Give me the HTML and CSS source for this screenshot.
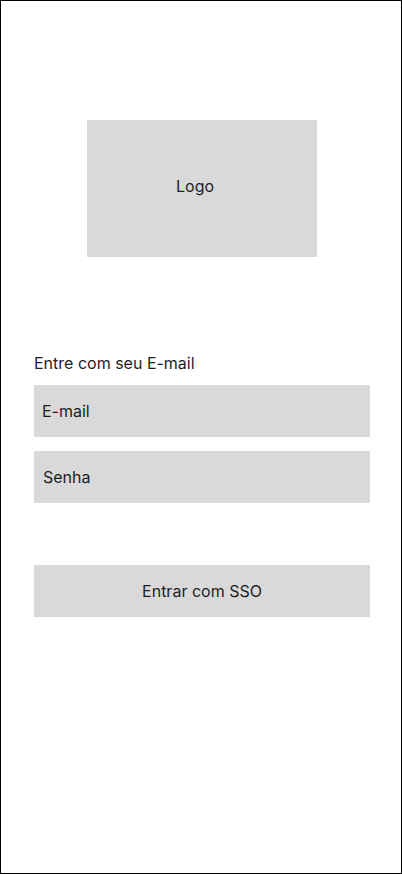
FILE: index.html
```html
<!DOCTYPE html>
<html lang="pt-BR">
<head>
<meta charset="utf-8">
<title>Login</title>
<link rel="stylesheet" href="styles.css">
</head>
<body>
<div class="frame">
  <div class="logo"><span class="logo-text">Logo</span></div>
  <div class="form">
    <div class="label">Entre com seu E-mail</div>
    <div class="field">E-mail</div>
    <div class="field field-second">Senha</div>
    <div class="button">Entrar com SSO</div>
  </div>
</div>
</body>
</html>
```
FILE: styles.css
```css
html, body {
  margin: 0;
  padding: 0;
  background: #ffffff;
}
body {
  font-family: Inter, "Noto Sans", sans-serif;
  font-size: 16px;
  color: #1e1e1e;
}
.frame {
  box-sizing: border-box;
  width: 402px;
  height: 874px;
  border: 1px solid #000000;
  padding-top: 119px;
  display: flex;
  flex-direction: column;
}
.logo {
  margin-left: 86px;
  width: 230px;
  height: 137px;
  background: #d9d9d9;
  display: flex;
  align-items: center;
  padding-left: 89px;
  padding-bottom: 5px;
  box-sizing: border-box;
  line-height: 19px;
}
.form {
  margin-top: 97px;
  padding-left: 33px;
  padding-right: 31px;
  display: flex;
  flex-direction: column;
}
.label {
  line-height: 19px;
  margin-bottom: 12px;
}
.field {
  height: 52px;
  background: #d9d9d9;
  display: flex;
  align-items: center;
  padding-left: 8px;
  line-height: 19px;
}
.field-second {
  margin-top: 14px;
  padding-left: 9px;
}
.button {
  margin-top: 62px;
  height: 52px;
  background: #d9d9d9;
  display: flex;
  align-items: center;
  justify-content: center;
  line-height: 19px;
}
```
